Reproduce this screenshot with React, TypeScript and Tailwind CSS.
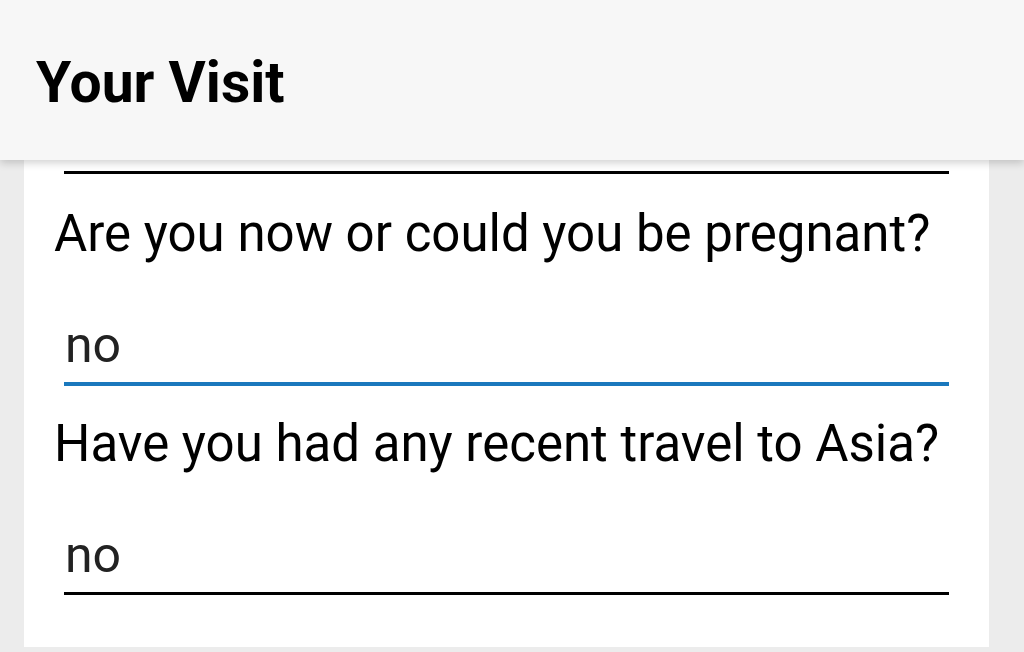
import React from 'react';

interface QuestionProps {
  label: string;
  value: string;
  focused?: boolean;
}

function Question({ label, value, focused }: QuestionProps) {
  return (
    <div>
      <p className="pl-[30px] text-[51px] leading-[60px] text-black">{label}</p>
      <div
        className={
          focused
            ? 'mx-[40px] mt-[51px] border-b-[4px] border-[#1a78bd] pb-[7px]'
            : 'mx-[40px] mt-[51px] border-b-[3px] border-black pb-[7px]'
        }
      >
        <input
          readOnly
          value={value}
          className="block h-[60px] w-full bg-transparent pl-[1px] text-[50px] leading-[60px] text-[#222] outline-none"
        />
      </div>
    </div>
  );
}

export default function App() {
  return (
    <div className="flex h-[652px] w-[1024px] flex-col overflow-hidden bg-[#ececec] font-['Roboto',sans-serif]">
      {/* Header */}
      <div className="relative z-10 flex h-[160px] shrink-0 items-center bg-[#f7f7f7] pl-[36px] shadow-[0_3px_8px_rgba(0,0,0,0.18)]">
        <h1 className="pt-[5px] text-[57px] font-bold leading-none text-black">Your Visit</h1>
      </div>

      {/* Card */}
      <div className="ml-[24px] mr-[35px] h-[487px] shrink-0 bg-white">
        <div className="mx-[40px] mt-[11px] h-[3px] bg-black" />
        <div className="mt-[30px]">
          <Question label="Are you now or could you be pregnant?" value="no" focused />
        </div>
        <div className="mt-[28px]">
          <Question label="Have you had any recent travel to Asia?" value="no" />
        </div>
      </div>
    </div>
  );
}
